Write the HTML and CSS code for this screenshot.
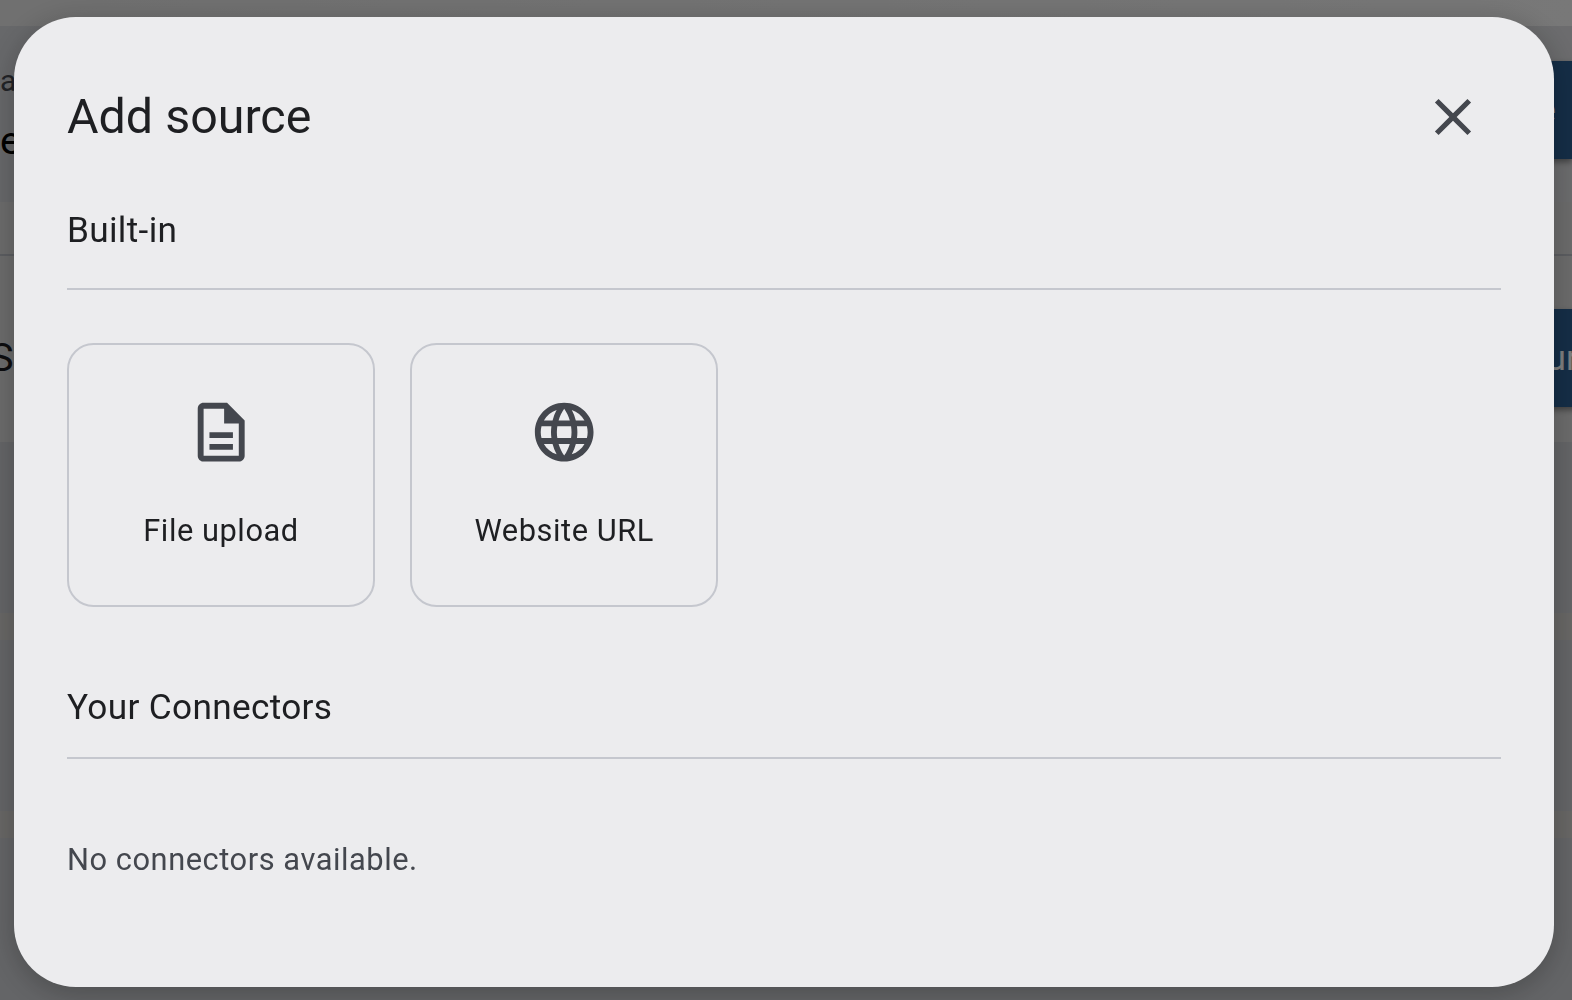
FILE: index.html
```html
<!DOCTYPE html>
<html lang="en">
<head>
    <meta charset="UTF-8">
    <meta name="viewport" content="width=device-width, initial-scale=1.0">
    <title>Add source</title>
    <link rel="stylesheet" href="styles.css">
</head>
<body>
    <div class="page">
        <div class="top-bar"></div>
        <div class="page-header">
            <div class="crumbs">
                <div class="crumb">a</div>
                <div class="page-name">e</div>
            </div>
            <div class="primary-btn header-btn">Save</div>
        </div>
        <div class="tabs"></div>
        <div class="sources-head">
            <div class="sources-title">S</div>
            <div class="primary-btn add-btn">Add source</div>
        </div>
        <div class="list-row"></div>
        <div class="list-gap"></div>
        <div class="list-row"></div>
        <div class="list-gap"></div>
        <div class="list-row"></div>
    </div>

    <div class="scrim"></div>

    <div class="dialog">
        <div class="dialog-head">
            <h1>Add source</h1>
            <button class="close-btn" type="button" aria-label="Close">
                <svg viewBox="0 0 24 24"><path d="M19 6.41L17.59 5 12 10.59 6.41 5 5 6.41 10.59 12 5 17.59 6.41 19 12 13.41 17.59 19 19 17.59 13.41 12z"/></svg>
            </button>
        </div>

        <h2 class="built-in">Built-in</h2>
        <div class="cards">
            <button class="card" type="button">
                <svg viewBox="0 0 24 24"><path d="M8 16h8v2H8zm0-4h8v2H8zm6-10H6c-1.1 0-2 .9-2 2v16c0 1.1.89 2 1.99 2H18c1.1 0 2-.9 2-2V8l-6-6zm4 18H6V4h7v5h5v11z"/></svg>
                <span>File upload</span>
            </button>
            <button class="card" type="button">
                <svg viewBox="0 0 24 24"><path d="M11.99 2C6.47 2 2 6.48 2 12s4.47 10 9.99 10C17.52 22 22 17.52 22 12S17.52 2 11.99 2zm6.93 6h-2.95c-.32-1.25-.78-2.45-1.38-3.56 1.84.63 3.37 1.91 4.33 3.56zM12 4.04c.83 1.2 1.48 2.53 1.91 3.96h-3.82c.43-1.43 1.08-2.76 1.91-3.96zM4.26 14C4.1 13.36 4 12.69 4 12s.1-1.36.26-2h3.38c-.08.66-.14 1.32-.14 2s.06 1.34.14 2H4.26zm.82 2h2.95c.32 1.25.78 2.45 1.38 3.56-1.84-.63-3.37-1.9-4.33-3.56zm2.95-8H5.08c.96-1.66 2.49-2.93 4.33-3.56C8.81 5.55 8.35 6.75 8.03 8zM12 19.96c-.83-1.2-1.48-2.53-1.91-3.96h3.82c-.43 1.43-1.08 2.76-1.91 3.96zM14.34 14H9.66c-.09-.66-.16-1.32-.16-2s.07-1.35.16-2h4.68c.09.65.16 1.32.16 2s-.07 1.34-.16 2zm.25 5.56c.6-1.11 1.06-2.31 1.38-3.56h2.95c-.96 1.65-2.49 2.93-4.33 3.56zM16.36 14c.08-.66.14-1.32.14-2s-.06-1.34-.14-2h3.38c.16.64.26 1.31.26 2s-.1 1.36-.26 2h-3.38z"/></svg>
                <span>Website URL</span>
            </button>
        </div>

        <h2 class="connectors">Your Connectors</h2>
        <p class="empty">No connectors available.</p>
    </div>
</body>
</html>
```

FILE: styles.css
```css
* {
    box-sizing: border-box;
}
html, body {
    height: 100%;
}
body {
    margin: 0;
    font-family: Roboto, "Liberation Sans", sans-serif;
    overflow: hidden;
    background-color: #cacbd0;
}

/* page behind the dialog */
.page {
    height: 1000px;
    overflow: hidden;
    color: #1b1b1f;
}
.top-bar {
    height: 26px;
    background: linear-gradient(90deg, #e0e0e0, #f0f0f0);
}
.page-header {
    height: 176px;
    display: flex;
    justify-content: space-between;
    align-items: flex-start;
    padding-top: 35px;
    background: linear-gradient(90deg, #cfd1d5, #d8d9dc);
}
.crumb {
    font-size: 30px;
    line-height: 40px;
    color: #44474e;
}
.page-name {
    font-size: 39.6px;
    line-height: 40px;
    margin-top: 20px;
    color: #000;
}
.primary-btn {
    height: 98px;
    background-color: #2a5c8e;
    color: #fff;
    font-size: 35.2px;
    line-height: 98px;
    white-space: nowrap;
    box-shadow: 0 3px 6px rgba(0, 0, 0, 0.4);
}
.header-btn {
    width: 100px;
    text-align: right;
    padding-right: 16px;
}
.tabs {
    height: 54px;
    border-bottom: 2px solid #b8bbc2;
    background-color: #d8d8d8;
}
.sources-head {
    height: 186px;
    display: flex;
    justify-content: space-between;
    align-items: flex-start;
    padding-top: 53px;
    background-color: #d8d8d8;
}
.sources-title {
    font-size: 39.6px;
    line-height: 98px;
    margin-left: -10px;
}
.add-btn {
    width: 250px;
    margin-right: -98px;
    padding-left: 17px;
}
.list-row {
    height: 171px;
    background-color: #c9cbcf;
}
.list-gap {
    height: 27px;
    background-color: #d1cfcc;
}

.scrim {
    position: fixed;
    inset: 0;
    background-color: rgba(0, 0, 0, 0.5);
}

/* dialog */
.dialog {
    position: fixed;
    left: 14px;
    top: 17px;
    width: 1540px;
    height: 970px;
    padding: 69px 53px 0;
    background-color: #ececee;
    border-radius: 62px;
    box-shadow: 0 6px 30px rgba(0, 0, 0, 0.25);
}
.dialog-head {
    display: flex;
    justify-content: space-between;
    align-items: center;
    height: 62px;
}
h1 {
    margin: 0;
    font-size: 48.4px;
    font-weight: 400;
    line-height: 62px;
    color: #1e1f22;
}
.close-btn {
    width: 62px;
    height: 62px;
    margin-right: 17px;
    padding: 0;
    border: none;
    background: none;
    cursor: pointer;
}
.close-btn svg {
    display: block;
    width: 62px;
    height: 62px;
    fill: #44474e;
}
h2 {
    margin: 0;
    font-size: 35.2px;
    font-weight: 400;
    line-height: 52px;
    letter-spacing: 0.33px;
    color: #1e1f22;
    border-bottom: 2.2px solid #c5c7ce;
}
.built-in {
    margin-top: 56px;
    padding-bottom: 32px;
}
.cards {
    display: flex;
    gap: 35.2px;
    margin-top: 53px;
}
.card {
    width: 308px;
    height: 264px;
    display: flex;
    flex-direction: column;
    align-items: center;
    padding: 52px 0 0;
    background: none;
    border: 2.2px solid #c5c7ce;
    border-radius: 26.4px;
    cursor: pointer;
    font-family: inherit;
    color: #1e1f22;
}
.card svg {
    width: 70.4px;
    height: 70.4px;
    fill: #44474e;
}
.card span {
    margin-top: 42px;
    font-size: 30.8px;
    line-height: 44px;
    letter-spacing: 0.55px;
}
.connectors {
    margin-top: 74px;
    padding-bottom: 24px;
}
.empty {
    margin: 79px 0 0;
    font-size: 30.8px;
    line-height: 44px;
    letter-spacing: 0.55px;
    color: #44474e;
}
```
